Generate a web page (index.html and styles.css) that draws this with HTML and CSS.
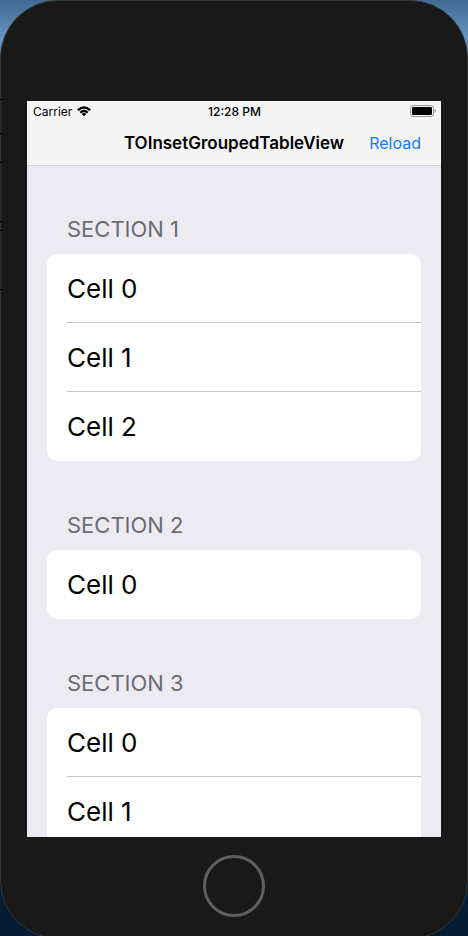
FILE: index.html
```html
<!DOCTYPE html>
<html lang="en">
<head>
<meta charset="utf-8">
<meta name="viewport" content="width=device-width, initial-scale=1">
<title>TOInsetGroupedTableView</title>
<link rel="stylesheet" href="styles.css">
</head>
<body>
<div class="device">
  <div class="side-buttons" aria-hidden="true"><i></i><i></i><i></i></div>
  <div class="screen">
    <div class="status-bar">
      <div class="carrier">
        <span>Carrier</span>
        <svg class="wifi" viewBox="0 0 14 10" aria-hidden="true">
          <path d="M0.1 3.4Q7 -3 13.9 3.4L12.2 5.1Q7 0.6 1.8 5.1Z"/>
          <path d="M2.5 5.8Q7 1.6 11.5 5.8L9.9 7.4Q7 5 4.1 7.4Z"/>
          <path d="M4.8 8Q7 6 9.2 8L7 10.2Z"/>
        </svg>
      </div>
      <time class="clock">12:28 PM</time>
      <svg class="battery" viewBox="0 0 26 12" aria-hidden="true">
        <rect x="0.5" y="0.5" width="23" height="11" rx="2.8" fill="none" stroke="#929292"/>
        <rect x="2" y="2" width="20" height="8" rx="1.2"/>
        <path d="M24.6 4.2Q26 4.7 26 6T24.6 7.8Z" fill="#929292"/>
      </svg>
    </div>
    <header class="nav-bar">
      <h1>TOInsetGroupedTableView</h1>
      <button type="button">Reload</button>
    </header>
    <main class="table-view">
      <section>
        <h2>SECTION 1</h2>
        <ul>
          <li><span>Cell 0</span></li>
          <li><span>Cell 1</span></li>
          <li><span>Cell 2</span></li>
        </ul>
      </section>
      <section>
        <h2>SECTION 2</h2>
        <ul>
          <li><span>Cell 0</span></li>
        </ul>
      </section>
      <section>
        <h2>SECTION 3</h2>
        <ul>
          <li><span>Cell 0</span></li>
          <li><span>Cell 1</span></li>
        </ul>
      </section>
    </main>
  </div>
  <div class="chin">
    <button class="home" type="button" aria-label="Home"></button>
  </div>
</div>
</body>
</html>
```

FILE: styles.css
```css
* {
  box-sizing: border-box;
}

body {
  margin: 0;
  height: 100vh;
  overflow: hidden;
  font-family: Inter, "Liberation Sans", sans-serif;
  color: #000;
  background: linear-gradient(#426a93 0, #6697c5 40px, #233 120px, #0a2038 800px, #031c33 100%);
}

h1, h2, ul {
  margin: 0;
  padding: 0;
}

button {
  padding: 0;
  border: 0;
  background: none;
  font-family: inherit;
}

.device {
  position: relative;
  display: flex;
  flex-direction: column;
  height: calc(100vh + 3px);
  padding: 100px 26px 0;
  border: 1px solid #353535;
  border-radius: 58px;
  background: #191919;
}

.side-buttons {
  position: absolute;
  left: -1px;
  top: 98px;
  width: 2px;
}

.side-buttons i {
  display: block;
  height: 60px;
  margin-bottom: 8px;
  background: #292929;
  border: solid #000;
  border-width: 1px 0;
}

.side-buttons i:first-child {
  height: 35px;
  margin-bottom: 28px;
}

.screen {
  flex: 1;
  min-height: 0;
  display: flex;
  flex-direction: column;
  background: #ecebf2;
}

.status-bar {
  flex: none;
  display: grid;
  grid-template-columns: 1fr auto 1fr;
  align-items: center;
  height: 20px;
  padding: 0 5px 0 6px;
  font-size: 12px;
  background: #f5f5f5;
}

.carrier {
  display: flex;
  align-items: center;
  gap: 5px;
}

.wifi {
  width: 14px;
  height: 10px;
  overflow: visible;
}

.clock {
  font-weight: 500;
}

.battery {
  justify-self: end;
  width: 26px;
  height: 12px;
}

.nav-bar {
  flex: none;
  display: grid;
  grid-template-columns: 1fr auto 1fr;
  align-items: center;
  height: 44px;
  padding: 0 20px;
  box-shadow: 0 1px #ceced4;
  background: #f5f5f5;
}

.nav-bar h1 {
  grid-column: 2;
  font-size: 17px;
  font-weight: 600;
}

.nav-bar button {
  justify-self: end;
  font-size: 16px;
  color: #127cf8;
}

.table-view {
  flex: 1;
  min-height: 0;
  padding: 0 20px;
  overflow-y: auto;
  scrollbar-width: none;
}

.table-view h2 {
  padding: 48px 20px 9px;
  font-size: 22px;
  font-weight: 400;
  line-height: 32px;
  color: #6c6b71;
}

.table-view ul {
  list-style: none;
  border-radius: 10px;
  background: #fff;
}

.table-view li {
  padding-left: 20px;
}

.table-view li span {
  display: block;
  height: 69px;
  line-height: 69px;
  font-size: 26px;
  border-bottom: 1px solid #c6c6c8;
}

.table-view li:last-child span {
  border-bottom: 0;
}

.chin {
  flex: none;
  display: flex;
  justify-content: center;
  height: 101px;
  padding-top: 18px;
}

.home {
  width: 62px;
  height: 62px;
  border: 3px solid #5f5f5f;
  border-radius: 50%;
}
```
